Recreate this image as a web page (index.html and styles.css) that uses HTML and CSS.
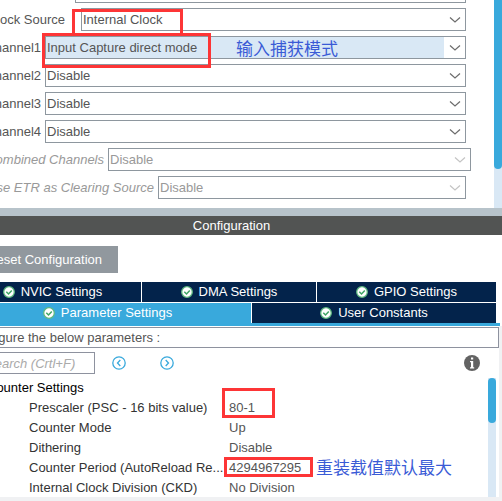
FILE: index.html
```
<!DOCTYPE html>
<html lang="en">
<head>
<meta charset="utf-8">
<title>Timer configuration</title>
<link rel="stylesheet" href="styles.css">
</head>
<body>
<svg class="defs" aria-hidden="true">
  <symbol id="chevron" viewBox="0 0 12 8"><path d="M1 1.5 6 6 11 1.5" fill="none" stroke="currentColor" stroke-width="1.2"/></symbol>
  <symbol id="check" viewBox="0 0 12 12"><circle cx="6" cy="6" r="5.3" fill="#fff" stroke="#5fb980" stroke-width="1.3"/><path d="M3.3 5.8 5.5 8 8.8 4.4" fill="none" stroke="#3fa565" stroke-width="1.5"/></symbol>
</svg>
<main class="app">
  <section class="mode">
    <form class="mode-form">
      <div class="row"><label class="w-trigger" for="trigger"></label><span class="combo"><select id="trigger"><option></option></select></span></div>
      <div class="row"><label class="w-clock" for="clock">Clock Source</label><span class="combo"><select id="clock"><option>Internal Clock</option></select><svg class="chevron"><use href="#chevron"/></svg></span></div>
      <div class="row"><label for="ch1">Channel1</label><span class="combo selected"><select id="ch1"><option>Input Capture direct mode</option></select><svg class="chevron"><use href="#chevron"/></svg></span></div>
      <div class="row"><label for="ch2">Channel2</label><span class="combo"><select id="ch2"><option>Disable</option></select><svg class="chevron"><use href="#chevron"/></svg></span></div>
      <div class="row"><label for="ch3">Channel3</label><span class="combo"><select id="ch3"><option>Disable</option></select><svg class="chevron"><use href="#chevron"/></svg></span></div>
      <div class="row"><label for="ch4">Channel4</label><span class="combo"><select id="ch4"><option>Disable</option></select><svg class="chevron"><use href="#chevron"/></svg></span></div>
      <div class="row off wide"><label class="w-combined" for="combined">Combined Channels</label><span class="combo"><select id="combined" disabled><option>Disable</option></select><svg class="chevron"><use href="#chevron"/></svg></span></div>
      <div class="row off"><label class="w-etr" for="etr">Use ETR as Clearing Source</label><span class="combo"><select id="etr" disabled><option>Disable</option></select><svg class="chevron"><use href="#chevron"/></svg></span></div>
    </form>
    <div class="scroll"><div class="thumb thumb-mode"></div></div>
    <div class="mark mark-clock"></div>
    <div class="mark mark-channel"></div>
    <div class="note note-channel" lang="zh">输入捕获模式</div>
  </section>
  <div class="sash"></div>
  <h2 class="title">Configuration</h2>
  <button class="reset" type="button">Reset Configuration</button>
  <nav class="tabs">
    <div class="tab-row first">
      <button type="button"><svg class="check"><use href="#check"/></svg>NVIC Settings</button>
      <button type="button"><svg class="check"><use href="#check"/></svg>DMA Settings</button>
      <button type="button"><svg class="check"><use href="#check"/></svg>GPIO Settings</button>
    </div>
    <div class="tab-row second">
      <button class="active" type="button"><svg class="check"><use href="#check"/></svg>Parameter Settings</button>
      <button type="button"><svg class="check"><use href="#check"/></svg>User Constants</button>
    </div>
  </nav>
  <section class="params">
    <p class="hint">Configure the below parameters :</p>
    <div class="tools">
      <input class="search" type="text" placeholder="Search (Crtl+F)" aria-label="Search">
      <button class="step" type="button" aria-label="Previous"><svg viewBox="0 0 14 14"><circle cx="7" cy="7" r="6.2"/><path d="M8.3 4 5.5 7 8.3 10"/></svg></button>
      <button class="step" type="button" aria-label="Next"><svg viewBox="0 0 14 14"><circle cx="7" cy="7" r="6.2"/><path d="M5.7 4 8.5 7 5.7 10"/></svg></button>
      <button class="info" type="button" aria-label="Information"><svg viewBox="0 0 16 16"><circle cx="8" cy="8" r="8" fill="#636363"/><path d="M7 2.6h2.2v2H7zM6 6h3.2v6.3h1V13.5H6v-1.2h1V7.2H6z" fill="#fff"/></svg></button>
    </div>
    <div class="tree">
      <table>
        <thead><tr><th colspan="2">Counter Settings</th></tr></thead>
        <tbody>
          <tr><td>Prescaler (PSC - 16 bits value)</td><td>80-1</td></tr>
          <tr><td>Counter Mode</td><td>Up</td></tr>
          <tr><td>Dithering</td><td>Disable</td></tr>
          <tr><td>Counter Period (AutoReload Re...</td><td>4294967295</td></tr>
          <tr><td>Internal Clock Division (CKD)</td><td>No Division</td></tr>
        </tbody>
      </table>
      <div class="scroll"><div class="thumb thumb-tree"></div></div>
      <div class="mark mark-prescaler"></div>
      <div class="mark mark-period"></div>
      <div class="note note-period" lang="zh">重装载值默认最大</div>
    </div>
  </section>
</main>
</body>
</html>
```
FILE: styles.css
```
* { box-sizing: border-box; }
body {
  margin: 0;
  background: #fff;
  color: #555;
  font: 13px/20px "Liberation Sans", "Noto Sans CJK SC", sans-serif;
  overflow: hidden;
}
button, input, select { font: inherit; color: inherit; border-radius: 0; }
button { border: 0; padding: 0; background: none; }
.defs { display: none; }

.mode { position: relative; display: flex; height: 208px; overflow: hidden; }
.mode-form {
  flex: 1;
  display: flex;
  flex-direction: column;
  gap: 5px;
  margin-top: -20px;
  padding-right: 28px;
}
.row { display: flex; flex: none; height: 23px; }
.row.wide { margin-right: -5px; }
.row label {
  display: flex;
  justify-content: flex-end;
  flex: none;
  width: 45px;
  padding-right: 4px;
  line-height: 23px;
  white-space: nowrap;
}
.row .w-trigger { width: 75px; }
.row .w-clock { width: 81px; padding-right: 16px; }
.row .w-combined { width: 108px; }
.row .w-etr { width: 158px; }
.combo { position: relative; flex: 1; display: flex; border: 1px solid #8e979f; }
.combo select {
  appearance: none;
  flex: 1;
  min-width: 0;
  border: 0;
  padding: 0 22px 0 1px;
  background: #fff;
  opacity: 1;
}
.combo.selected select { background: linear-gradient(to left, #fff 21px, #d9e8f5 21px); }
.chevron {
  position: absolute;
  right: 4px;
  top: 7px;
  width: 12px;
  height: 8px;
  color: #6c6c6c;
  pointer-events: none;
}
.off { color: #999; }
.off label { font-style: italic; }
.off .chevron { color: #c4c4c4; }

.scroll { flex: none; width: 8px; background: #d9e8f5; }
.thumb { background: #39a9dc; }
.thumb-mode { height: 169px; border-radius: 0 0 4px 4px; }
.thumb-tree { height: 45px; border-radius: 4px; }

.sash { height: 8px; background: #b7c3ca; }
.title {
  margin: 0;
  background: #525453;
  color: #fff;
  font-size: 13px;
  font-weight: normal;
  line-height: 19px;
  text-align: center;
  padding-right: 39px;
}
.reset {
  display: flex;
  justify-content: flex-end;
  width: 118px;
  height: 27px;
  margin: 11px 0 9px;
  padding-right: 16px;
  background: #91989e;
  color: #fff;
  line-height: 27px;
  white-space: nowrap;
}

.tabs { border-bottom: 3px solid #39a9dc; margin-right: 2px; padding-right: 4px; }
.tab-row { display: grid; gap: 1px; }
.tab-row.first { grid-template-columns: 141fr 174fr 179fr; margin-bottom: 1px; }
.tab-row.second { grid-template-columns: 251fr 244fr; }
.tab-row button {
  display: flex;
  align-items: center;
  justify-content: center;
  gap: 6px;
  height: 20px;
  background: #03234b;
  color: #fff;
}
.tab-row.second button { height: 20px; }
.tab-row .active { background: #39a9dc; padding-right: 36px; }
.tab-row.first button:first-child { padding-right: 36px; }
.check { width: 12px; height: 12px; flex: none; }

.params { border: solid #f0f1f3; border-width: 0 3px 4px 0; padding-top: 1px; }
.hint {
  margin: 0;
  height: 21px;
  border: 1px solid #8e929f;
  border-left: 0;
  line-height: 19px;
  text-indent: -32px;
}
.tools { display: flex; align-items: center; margin-top: 4px; height: 22px; }
.search {
  width: 95px;
  height: 22px;
  border: 1px solid #8e929f;
  border-left: 0;
  padding: 0 16px 0 0;
  text-indent: -14px;
  font-style: italic;
}
.search::placeholder { color: #aaa; }
.step { width: 14px; height: 14px; margin-left: 17px; }
.step + .step { margin-left: 34px; }
.step svg { display: block; fill: none; stroke: #39a9dc; stroke-width: 1.3; }
.info { width: 16px; height: 16px; margin: 0 19px 0 auto; }
.info svg { display: block; }

.tree { position: relative; display: flex; margin-top: 4px; padding-right: 3px; height: 119px; }
table { flex: 1; border-collapse: collapse; align-self: flex-start; table-layout: fixed; }
th, td { padding: 0; height: 20px; line-height: 20px; text-align: left; white-space: nowrap; }
th { color: #000; font-weight: normal; text-indent: -13px; }
td:first-child { width: 229px; padding-left: 29px; color: #333; }

.mark { position: absolute; border: 3px solid #fd3536; }
.mark-clock { left: 72px; top: 9px; width: 111px; height: 27px; }
.mark-channel { left: 42px; top: 33px; width: 169px; height: 35px; }
.mark-prescaler { left: 222px; top: 10px; width: 53px; height: 30px; }
.mark-period { left: 224px; top: 79px; width: 89px; height: 20px; }
.note { position: absolute; color: #3a5bd6; font-size: 17px; line-height: 20px; white-space: nowrap; }
.note-channel { left: 236px; top: 40px; }
.note-period { left: 316px; top: 81px; }
```
